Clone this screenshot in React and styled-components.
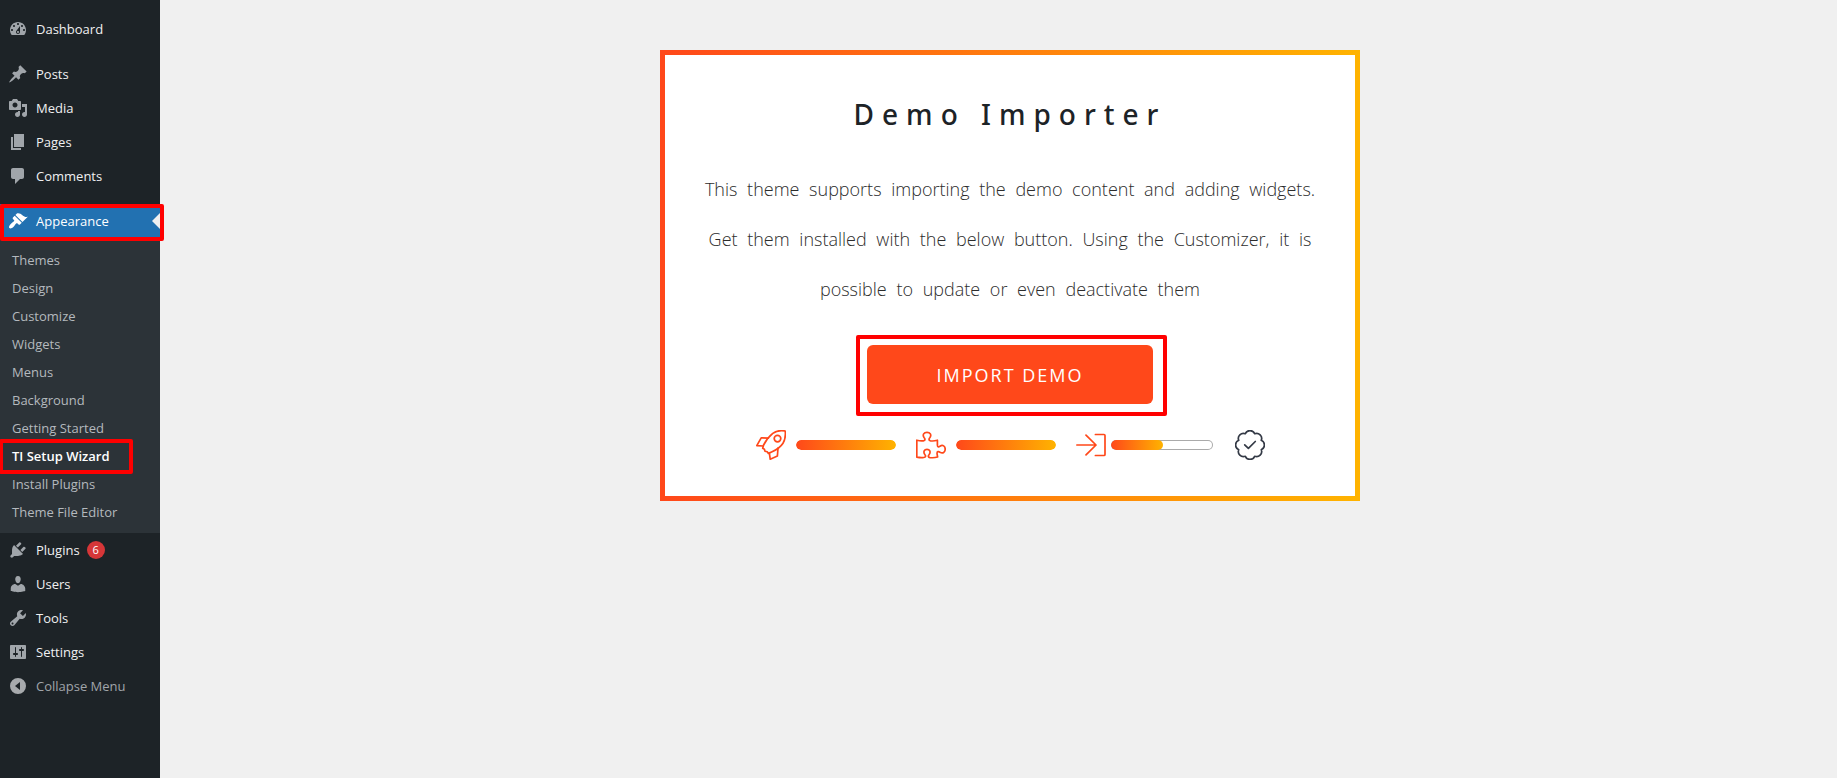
import React from "react";
import styled, { createGlobalStyle } from "styled-components";

const GlobalStyle = createGlobalStyle`
  *, *::before, *::after {
    box-sizing: border-box;
  }

  body {
    margin: 0;
    background: #f0f0f0;
    font-family: "Open Sans", "Noto Sans", sans-serif;
    font-size: 13px;
    color: #1d2327;
  }
`;

const Page = styled.div`
  display: flex;
  min-height: 100vh;
`;

const Sidebar = styled.nav`
  flex: none;
  width: 160px;
  padding-top: 12px;
  background: #1d2327;
`;

const MenuList = styled.ul`
  margin: 0;
  padding: 0;
  list-style: none;
`;

const MenuItem = styled.li`
  margin-top: ${(props) => (props.$separated ? "11px" : "0")};
`;

const MenuRow = styled.div`
  position: relative;
`;

const MenuLink = styled.a`
  display: flex;
  align-items: center;
  height: 34px;
  color: ${(props) => (props.$active ? "#fff" : "#f0f0f1")};
  background: ${(props) => (props.$active ? "#2271b1" : "transparent")};
  text-decoration: none;

  svg {
    fill: ${(props) => (props.$active ? "#fff" : "#a0a5aa")};
  }
`;

const MenuIcon = styled.svg`
  flex: none;
  width: 20px;
  height: 20px;
  margin: 0 8px;
`;

const ActiveArrow = styled.span`
  margin-left: auto;
  border: 8px solid transparent;
  border-right-color: #f0f0f0;
`;

const Count = styled.span`
  min-width: 18px;
  height: 18px;
  margin-left: 7px;
  border-radius: 9px;
  background: #d63638;
  color: #fff;
  font-size: 11px;
  line-height: 18px;
  text-align: center;
`;

const SubMenu = styled.ul`
  margin: 0;
  padding: 8px 0 7px;
  list-style: none;
  background: #2c3338;
`;

const SubItem = styled.li`
  position: relative;
`;

const SubLink = styled.a`
  display: block;
  padding: 0 12px;
  line-height: 28px;
  color: ${(props) => (props.$current ? "#fff" : "#b4b9be")};
  font-weight: ${(props) => (props.$current ? 600 : 400)};
  text-decoration: none;
`;

const CollapseButton = styled.button`
  display: flex;
  align-items: center;
  width: 100%;
  height: 34px;
  padding: 0;
  border: 0;
  background: none;
  color: #a0a5aa;
  font: inherit;
  cursor: pointer;

  svg {
    fill: #a7aaad;
  }
`;

/* red frames that point the reader to the next step */
const Marker = styled.span`
  position: absolute;
  z-index: 1;
  border: 4px solid #f00;
  border-radius: 2px;
  pointer-events: none;
`;

const MenuMarker = styled(Marker)`
  inset: 0 -4px -3px 0;
`;

const SubMarker = styled(Marker)`
  inset: -3px 27px -4px -1px;
`;

const ButtonMarker = styled(Marker)`
  inset: -10px -14px -12px -11px;
`;

const Content = styled.main`
  flex: 1;
  display: flex;
  justify-content: center;
  align-items: flex-start;
  padding: 50px 0 50px 23px;
`;

const Card = styled.section`
  width: 100%;
  max-width: 700px;
  padding: 34px 35px 36px;
  border: 5px solid;
  border-image: linear-gradient(to right, #ff481a, #ffb300) 1;
  background: #fff;
  text-align: center;
`;

const Title = styled.h1`
  margin: 0 0 25px;
  font-family: "Noto Sans", "Open Sans", sans-serif;
  font-size: 28px;
  font-weight: 500;
  line-height: 50px;
  letter-spacing: 8px;
`;

const Description = styled.p`
  margin: 0 0 31px;
  color: #2c2c2c;
  font-size: 18px;
  font-weight: 300;
  line-height: 50px;
  word-spacing: 5px;
`;

const ButtonWrap = styled.div`
  position: relative;
  width: 286px;
  margin: 0 auto 26px;
`;

const ImportButton = styled.button`
  display: block;
  width: 100%;
  height: 59px;
  border: 0;
  border-radius: 6px;
  background: #ff481a;
  color: #fff;
  font-family: inherit;
  font-size: 18px;
  letter-spacing: 2px;
  text-transform: uppercase;
  cursor: pointer;
`;

const Steps = styled.div`
  display: flex;
  justify-content: center;
  align-items: center;
  gap: 20px;
`;

const Step = styled.div`
  display: flex;
  align-items: center;
  gap: ${(props) => (props.$running ? "5px" : "10px")};
  margin-right: ${(props) => (props.$running ? "2px" : "0")};
`;

const StepIcon = styled.svg`
  flex: none;
  width: 30px;
  height: 30px;
  fill: none;
  stroke: ${(props) => props.$color || "#ff481a"};
  stroke-width: 1.7;
  stroke-linejoin: round;
  stroke-linecap: round;
`;

const Bar = styled.div`
  width: ${(props) => (props.$outlined ? "102px" : "100px")};
  height: 10px;
  overflow: hidden;
  border-radius: 5px;
  box-shadow: ${(props) => (props.$outlined ? "inset 0 0 0 1px #aaa" : "none")};
`;

const BarFill = styled.div`
  width: ${(props) => props.$value}%;
  height: 100%;
  border-radius: 5px;
  background: linear-gradient(to right, #ff481a, #ffb300);
`;

const icons = {
  dashboard:
    "M3.76 16h12.48c1.1-1.37 1.76-3.11 1.76-5 0-4.42-3.58-8-8-8s-8 3.58-8 8c0 1.89.66 3.63 1.76 5zM10 4c.55 0 1 .45 1 1s-.45 1-1 1-1-.45-1-1 .45-1 1-1zM6 6c.55 0 1 .45 1 1s-.45 1-1 1-1-.45-1-1 .45-1 1-1zm8 0c.55 0 1 .45 1 1s-.45 1-1 1-1-.45-1-1 .45-1 1-1zm-5.37 5.55L12 7v6c0 1.1-.9 2-2 2s-2-.9-2-2c0-.57.24-1.08.63-1.45zM4 10c.55 0 1 .45 1 1s-.45 1-1 1-1-.45-1-1 .45-1 1-1zm12 0c.55 0 1 .45 1 1s-.45 1-1 1-1-.45-1-1 .45-1 1-1zm-5 3c0-.55-.45-1-1-1s-1 .45-1 1 .45 1 1 1 1-.45 1-1z",
  posts:
    "M10.44 3.02l1.82-1.82 6.36 6.35-1.83 1.82c-1.05-.68-2.48-.57-3.41.36l-.75.75c-.92.93-1.04 2.35-.35 3.41l-1.83 1.82-2.41-2.41-2.8 2.79c-.42.42-3.38 2.71-3.8 2.29s1.86-3.39 2.28-3.81l2.79-2.79L4.1 9.36l1.83-1.82c1.05.69 2.48.57 3.4-.36l.75-.75c.93-.92 1.05-2.35.36-3.41z",
  media:
    "M13 11V4c0-.55-.45-1-1-1h-1.67L9 1H5L3.67 3H2c-.55 0-1 .45-1 1v7c0 .55.45 1 1 1h10c.55 0 1-.45 1-1zM7 4.5c1.38 0 2.5 1.12 2.5 2.5S8.38 9.5 7 9.5 4.5 8.38 4.5 7 5.62 4.5 7 4.5zM14 6h5v10.5c0 1.38-1.12 2.5-2.5 2.5S14 17.88 14 16.5s1.12-2.5 2.5-2.5c.17 0 .34.02.5.05V9h-3V6zm-4 8.05V13h2v3.5c0 1.38-1.12 2.5-2.5 2.5S7 17.88 7 16.5 8.12 14 9.5 14c.17 0 .34.02.5.05z",
  pages: "M6 15V2h10v13H6zm-1 1h8v2H3V5h2v11z",
  comments:
    "M5 2h9c1.1 0 2 .9 2 2v7c0 1.1-.9 2-2 2h-2l-5 5v-5H5c-1.1 0-2-.9-2-2V4c0-1.1.9-2 2-2z",
  appearance:
    "M14.48 11.06L7.41 3.99l1.5-1.5c.5-.56 2.3-.47 3.51.32 1.21.8 1.43 1.28 2.91 2.1 1.18.64 2.45 1.26 4.45.85zm-.71.71L6.7 4.7 4.93 6.47c-.39.39-.39 1.02 0 1.41l1.06 1.06c.39.39.39 1.03 0 1.42-.6.6-1.43 1.11-2.21 1.69-.35.26-.7.53-1.01.84C1.43 14.23.4 16.08 1.4 17.07c.99 1 2.84-.03 4.18-1.36.31-.31.58-.66.85-1.02.57-.78 1.08-1.61 1.69-2.21.39-.39 1.02-.39 1.41 0l1.06 1.06c.39.39 1.02.39 1.41 0z",
  plugins:
    "M13.11 4.36L9.87 7.6 8 5.73l3.24-3.24c.35-.34 1.05-.2 1.56.32.52.51.66 1.21.31 1.55zm-8 1.77l.91-1.12 9.01 9.01-1.19.84c-.71.71-2.63 1.16-3.82 1.16H6.14L4.9 17.26c-.59.59-1.54.59-2.12 0-.59-.58-.59-1.53 0-2.12l1.24-1.24v-3.88c0-1.13.4-3.19 1.09-3.89zm7.26 3.97l3.24-3.24c.34-.35 1.04-.21 1.55.31.52.51.66 1.21.31 1.55l-3.24 3.25z",
  users:
    "M10 9.25c-2.27 0-2.73-3.44-2.73-3.44C7 4.02 7.82 2 9.97 2c2.16 0 2.98 2.02 2.71 3.81 0 0-.41 3.44-2.68 3.44zm0 2.57L12.72 10c2.39 0 4.52 2.33 4.52 4.53v2.49s-3.65 1.13-7.24 1.13c-3.65 0-7.24-1.13-7.24-1.13v-2.49c0-2.25 1.94-4.48 4.47-4.48z",
  tools:
    "M16.68 9.77c-1.34 1.34-3.3 1.67-4.95.99l-5.41 6.52c-.99.99-2.59.99-3.58 0s-.99-2.59 0-3.57l6.52-5.42c-.68-1.65-.35-3.61.99-4.95 1.28-1.28 3.12-1.62 4.72-1.06l-2.89 2.89 2.82 2.82 2.86-2.87c.53 1.58.18 3.39-1.08 4.65zM3.81 16.21c.4.39 1.04.39 1.43 0 .4-.4.4-1.04 0-1.43-.39-.4-1.03-.4-1.43 0-.39.39-.39 1.03 0 1.43z",
  settings:
    "M18 16V4c0-.55-.45-1-1-1H3c-.55 0-1 .45-1 1v12c0 .55.45 1 1 1h14c.55 0 1-.45 1-1zM8 11h1c.55 0 1 .45 1 1s-.45 1-1 1H8v1.5c0 .28-.22.5-.5.5s-.5-.22-.5-.5V13H6c-.55 0-1-.45-1-1s.45-1 1-1h1V5.5c0-.28.22-.5.5-.5s.5.22.5.5V11zm5-2h-1c-.55 0-1-.45-1-1s.45-1 1-1h1V5.5c0-.28.22-.5.5-.5s.5.22.5.5V7h1c.55 0 1 .45 1 1s-.45 1-1 1h-1v5.5c0 .28-.22.5-.5.5s-.5-.22-.5-.5V9z",
  collapse: "M10 2a8 8 0 1 1 0 16a8 8 0 1 1 0-16zM12 6L7 10l5 4z",
};

const menu = [
  { label: "Dashboard", icon: "dashboard" },
  { label: "Posts", icon: "posts", separated: true },
  { label: "Media", icon: "media" },
  { label: "Pages", icon: "pages" },
  { label: "Comments", icon: "comments" },
  {
    label: "Appearance",
    icon: "appearance",
    separated: true,
    children: [
      "Themes",
      "Design",
      "Customize",
      "Widgets",
      "Menus",
      "Background",
      "Getting Started",
      "TI Setup Wizard",
      "Install Plugins",
      "Theme File Editor",
    ],
  },
  { label: "Plugins", icon: "plugins", count: 6 },
  { label: "Users", icon: "users" },
  { label: "Tools", icon: "tools" },
  { label: "Settings", icon: "settings" },
];

const CURRENT = "TI Setup Wizard";

function Icon({ name }) {
  return (
    <MenuIcon viewBox="0 0 20 20" aria-hidden="true">
      <path fillRule="evenodd" d={icons[name]} />
    </MenuIcon>
  );
}

function RocketIcon() {
  return (
    <StepIcon viewBox="0 0 30 30" aria-hidden="true">
      <path d="M29.2 1C24.6.2 20 .9 16.8 3.4C13 6.4 9.6 11 7.6 15L6.7 18.2L8.4 19.2L9 21.2L11.2 21.8L12.4 23.4L15.6 22C20 20 24.6 17 27 13.2C29.2 9.6 29.7 5 29.2 1z" />
      <circle cx="21.5" cy="8.6" r="3.3" />
      <path d="M12.4 8.2L5.2 7.8L.8 15.6L7.2 16M13.4 23.4L14.2 29.2L21.4 26L22 18" />
    </StepIcon>
  );
}

function PuzzleIcon() {
  return (
    <StepIcon viewBox="0 0 30 30" aria-hidden="true">
      <path d="M.8 10.2C3 10.8 5.6 11.2 7.6 10.8C9.4 10.3 9.2 9 8.2 7.8C6 4.8 8 2.3 11 2.3S16 4.8 13.8 7.8C12.8 9 12.6 10.3 14.4 10.8C16.6 11.2 19.4 10.8 21.4 10.2V15C21.4 17.4 22.8 17.2 24 16.2C26.8 14.4 29.2 16.2 29.2 19.2S26.8 23.8 24 22.2C22.6 21.2 21 21.2 21 23.4L21.6 27C19 27.8 16.4 27.9 14 27.6C12 27.3 12 26 13 24.8C15.2 21.8 13.6 19.4 11 19.4S6.8 21.8 9 24.8C10 26 9.8 27.2 7.8 27.5C5.6 27.9 3 27.6.8 27.2z" />
    </StepIcon>
  );
}

function ImportIcon() {
  return (
    <StepIcon viewBox="0 0 30 30" aria-hidden="true">
      <path d="M.8 15H20M10 5.2L20 15L10 24.8M19.4 4.5H28a1 1 0 0 1 1 1V24.5a1 1 0 0 1-1 1H19.4" />
    </StepIcon>
  );
}

function DoneIcon() {
  return (
    <StepIcon viewBox="0 0 30 30" $color="#343a46" aria-hidden="true">
      <path d="M26.3 10.3A5.1 5.1 0 0 1 26.3 19.7A5.1 5.1 0 0 1 19.7 26.3A5.1 5.1 0 0 1 10.3 26.3A5.1 5.1 0 0 1 3.7 19.7A5.1 5.1 0 0 1 3.7 10.3A5.1 5.1 0 0 1 10.3 3.7A5.1 5.1 0 0 1 19.7 3.7A5.1 5.1 0 0 1 26.3 10.3z" />
      <path d="M9.7 14.8L13.4 18.4L20.3 11.5" />
    </StepIcon>
  );
}

function AdminMenu() {
  return (
    <Sidebar aria-label="Main menu">
      <MenuList>
        {menu.map(({ label, icon, separated, count, children }) => (
          <MenuItem key={label} $separated={separated}>
            <MenuRow>
              <MenuLink href="#" $active={Boolean(children)}>
                <Icon name={icon} />
                {label}
                {count && <Count>{count}</Count>}
                {children && <ActiveArrow />}
              </MenuLink>
              {children && <MenuMarker />}
            </MenuRow>
            {children && (
              <SubMenu>
                {children.map((item) => (
                  <SubItem key={item}>
                    <SubLink href="#" $current={item === CURRENT}>
                      {item}
                    </SubLink>
                    {item === CURRENT && <SubMarker />}
                  </SubItem>
                ))}
              </SubMenu>
            )}
          </MenuItem>
        ))}
      </MenuList>
      <CollapseButton type="button">
        <Icon name="collapse" />
        Collapse Menu
      </CollapseButton>
    </Sidebar>
  );
}

function DemoImporter() {
  return (
    <Card>
      <Title>Demo Importer</Title>
      <Description>
        This theme supports importing the demo content and adding widgets. Get
        them installed with the below button. Using the Customizer, it is
        possible to update or even deactivate them
      </Description>
      <ButtonWrap>
        <ImportButton type="button">Import Demo</ImportButton>
        <ButtonMarker />
      </ButtonWrap>
      <Steps>
        <Step>
          <RocketIcon />
          <Bar>
            <BarFill $value={100} />
          </Bar>
        </Step>
        <Step>
          <PuzzleIcon />
          <Bar>
            <BarFill $value={100} />
          </Bar>
        </Step>
        <Step $running>
          <ImportIcon />
          <Bar $outlined>
            <BarFill $value={51} />
          </Bar>
        </Step>
        <DoneIcon />
      </Steps>
    </Card>
  );
}

function App() {
  return (
    <>
      <GlobalStyle />
      <Page>
        <AdminMenu />
        <Content>
          <DemoImporter />
        </Content>
      </Page>
    </>
  );
}

export default App;
